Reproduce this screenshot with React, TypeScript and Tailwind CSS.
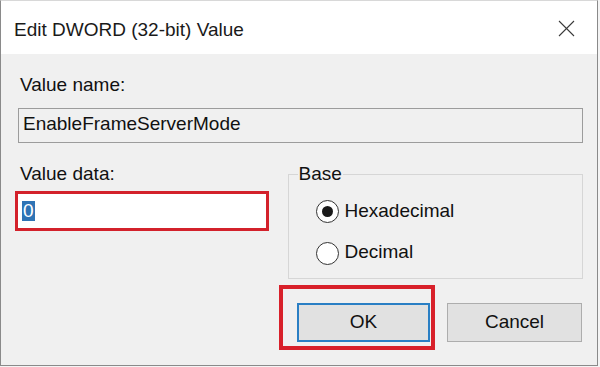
import React from "react";

export default function App() {
  const font = { fontFamily: '"Liberation Sans", Arial, sans-serif' };
  return (
    <div className="w-[600px] h-[367px] bg-[#f4f4f4] overflow-hidden" style={font}>
      <div className="w-[598px] h-[366px] bg-[#f0f0f0] border border-[#8a8a8a] border-t-[#d8d8d8] flex flex-col text-[19px] leading-[22px] text-[#111]">
        {/* Title bar */}
        <div className="h-[53px] bg-white flex items-start justify-between pl-[13px] pr-[22px] pt-[18px] shrink-0">
          <span className="text-[19px] leading-[22px] text-[#1a1a1a]">Edit DWORD (32-bit) Value</span>
          <svg width="17" height="17" viewBox="0 0 17 17" className="mt-[1px]">
            <line x1="1" y1="1" x2="16" y2="16" stroke="#3a3a3a" strokeWidth="1.1" />
            <line x1="16" y1="1" x2="1" y2="16" stroke="#3a3a3a" strokeWidth="1.1" />
          </svg>
        </div>

        {/* Body */}
        <div className="flex flex-col pl-[17px] pr-[14px] pt-[20px]">
          <div className="pl-[2px]">Value name:</div>
          <div className="mt-[12px] h-[35px] border border-[#9c9c9c] bg-[#f0f0f0] flex items-center pl-[4px] pb-[3px]">
            EnableFrameServerMode
          </div>

          <div className="flex mt-[20px]">
            {/* Left column */}
            <div className="flex flex-col w-[270px]">
              <div className="pl-[2px]">Value data:</div>
              <div className="mt-[6px] -ml-[3px] w-[254px] h-[40px] border-[3px] border-[#d3212b] bg-white flex items-center pl-[4px]">
                <span className="bg-[#2f74b5] text-white leading-[20px] px-[1px]">0</span>
              </div>
            </div>

            {/* Right column - Base group */}
            <fieldset className="w-[296px] h-[116px] border border-[#d6d6d6] pl-[27px] -mt-[0px] ml-[0px]">
              <legend className="px-[1px] ml-[-18px] leading-[22px]">Base</legend>
              <div className="flex flex-col mt-[15px] gap-[19px]">
                <div className="flex items-center gap-[6px]">
                  <span className="w-[23px] h-[23px] rounded-full border-[1.5px] border-[#333] bg-white flex items-center justify-center">
                    <span className="w-[11px] h-[11px] rounded-full bg-[#1a1a1a]" />
                  </span>
                  <span className="-mt-[2px]">Hexadecimal</span>
                </div>
                <div className="flex items-center gap-[6px]">
                  <span className="w-[23px] h-[23px] rounded-full border-[1.5px] border-[#333] bg-white" />
                  <span className="-mt-[4px]">Decimal</span>
                </div>
              </div>
            </fieldset>
          </div>

          {/* Buttons */}
          <div className="flex justify-end gap-[17px] mt-[24px] pr-[1px]">
            <div className="relative">
              <button className="w-[133px] h-[39px] bg-[#e1e1e1] border-2 border-[#2a7fc4] flex items-center justify-center pb-[2px]">
                OK
              </button>
              <div className="absolute left-[-18px] top-[-18px] right-[-5px] bottom-[-8px] border-[4px] border-[#d8202a] pointer-events-none" />
            </div>
            <button className="w-[135px] h-[39px] bg-[#e1e1e1] border border-[#adadad] flex items-center justify-center pb-[2px]">
              Cancel
            </button>
          </div>
        </div>
      </div>
    </div>
  );
}
